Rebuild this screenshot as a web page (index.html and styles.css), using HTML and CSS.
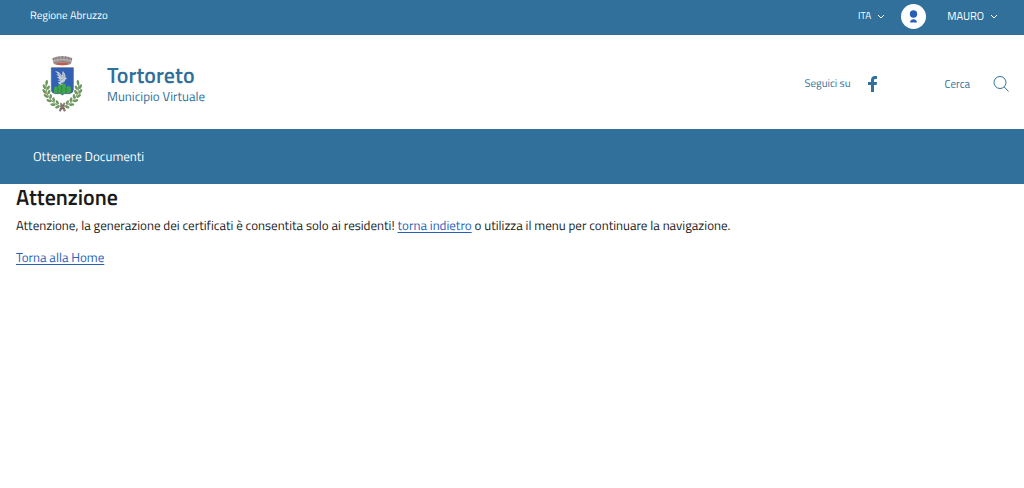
FILE: index.html
```html
<!DOCTYPE html>
<html lang="it">
<head>
    <meta charset="UTF-8">
    <meta name="viewport" content="width=device-width, initial-scale=1.0">
    <title>Tortoreto - Municipio Virtuale</title>
    <link rel="stylesheet" href="styles.css">
</head>
<body>
    <header>
        <div class="topbar">
            <a class="region" href="#">Regione Abruzzo</a>
            <div class="topbar-right">
                <button class="lang" type="button">
                    ITA
                    <svg class="chevron" viewBox="0 0 8 5" aria-hidden="true"><path d="M1 1l3 3 3-3"/></svg>
                </button>
                <button class="user" type="button">
                    <span class="avatar">
                        <svg viewBox="0 0 25 25" aria-hidden="true">
                            <circle cx="12.500" cy="10" r="3.700"/>
                            <path d="M9 18.500c.3-2 1.700-3.200 3.500-3.200s3.200 1.200 3.500 3.200z"/>
                        </svg>
                    </span>
                    MAURO
                    <svg class="chevron" viewBox="0 0 8 5" aria-hidden="true"><path d="M1 1l3 3 3-3"/></svg>
                </button>
            </div>
        </div>

        <div class="brandbar">
            <a class="brand" href="#">
                <svg class="crest" viewBox="0 0 138 174" aria-hidden="true">
                    <!-- laurel branches -->
                    <g fill="none" stroke="#6f9560" stroke-width="3">
                        <path d="M20 84C14 112 26 141 66 156"/>
                        <path d="M114 84C120 112 108 141 68 156"/>
                    </g>
                    <g id="laurel" fill="#6d9860">
                        <ellipse cx="20" cy="83" rx="4" ry="8" transform="rotate(8 20 83)"/>
                        <ellipse cx="13" cy="95" rx="4" ry="8" transform="rotate(-25 13 95)"/>
                        <ellipse cx="25" cy="98" rx="4" ry="7" transform="rotate(30 25 98)"/>
                        <ellipse cx="13" cy="109" rx="4" ry="8" transform="rotate(-38 13 109)"/>
                        <ellipse cx="27" cy="111" rx="4" ry="7" transform="rotate(20 27 111)"/>
                        <ellipse cx="18" cy="123" rx="4" ry="8" transform="rotate(-55 18 123)"/>
                        <ellipse cx="32" cy="124" rx="4" ry="7" transform="rotate(5 32 124)"/>
                        <ellipse cx="27" cy="137" rx="4" ry="8" transform="rotate(-70 27 137)"/>
                        <ellipse cx="41" cy="134" rx="4" ry="7" transform="rotate(-15 41 134)"/>
                        <ellipse cx="39" cy="149" rx="4" ry="8" transform="rotate(-88 39 149)"/>
                        <ellipse cx="52" cy="142" rx="4" ry="7" transform="rotate(-30 52 142)"/>
                        <ellipse cx="52" cy="156" rx="4" ry="7" transform="rotate(70 52 156)"/>
                    </g>
                    <use href="#laurel" transform="matrix(-1 0 0 1 134 0)"/>
                    <g fill="#b9823f">
                        <circle cx="20" cy="116" r="2"/>
                        <circle cx="34" cy="137" r="2"/>
                        <circle cx="114" cy="116" r="2"/>
                        <circle cx="100" cy="137" r="2"/>
                    </g>
                    <path d="M60 143h5l2 7 4-7h5l-4 12 6 12-6 3-5-9-5 9-6-3 6-12z" fill="#8d7d78"/>
                    <path d="M62 151h12M60 160h14" stroke="#62524e" stroke-width="2"/>
                    <!-- mural crown -->
                    <path d="M37 9q30-12 60 0l-4 18q-26 8-52 0z" fill="#a69b9b"/>
                    <path d="M40 10v7M48 7v7M57 5v7M67 4v8M77 5v7M86 7v7M94 10v7" stroke="#7c7273" stroke-width="3"/>
                    <path d="M39 17q28-9 56 0" fill="none" stroke="#c4bcbc" stroke-width="2"/>
                    <path d="M44 27q23-7 46 0-23 8-46 0z" fill="#c75747"/>
                    <path d="M42 23q25-7 50 0" fill="none" stroke="#80716f" stroke-width="2"/>
                    <!-- shield -->
                    <path d="M34 38h66v66q0 10-12 12H73l-6 4-6-4H46q-12-2-12-12z" fill="#3260b5" stroke="#5c6170" stroke-width="2"/>
                    <path d="M42 114V99q6-10 12 0v-7q5-9 11-1v-3q7-8 13 2v7q9-10 15 1v13l-7 4H73l-6 4-6-4z" fill="#3fa44f"/>
                    <path d="M54 99v14M65 91v24M78 98v15" stroke="#29733b" stroke-width="2"/>
                    <path d="M45 47l12 5 9 10 2-15 7 10 2 11 5 1-5 4-4 8-10 4 5 6-10-4-5-4 9-4-9-3 7-3-10-6 8-1-10-8 8 1z" fill="#c5ced9"/>
                    <path d="M57 56l10 13M70 56l2 12M60 76l11-5" stroke="#8492a9" stroke-width="2"/>
                </svg>
                <span class="brand-text">
                    <span class="brand-title">Tortoreto</span>
                    <span class="brand-subtitle">Municipio Virtuale</span>
                </span>
            </a>
            <div class="brand-tools">
                <div class="social">
                    <span>Seguici su</span>
                    <a href="#" aria-label="Facebook">
                        <svg class="facebook" viewBox="0 0 10 16" aria-hidden="true"><path d="M3 16V9H0V6h3V4c0-2.700 1.600-4 4-4 .9 0 1.700.1 2 .1V3H7.500C6.300 3 6 3.600 6 4.400V6h3l-.4 3H6v7z"/></svg>
                    </a>
                </div>
                <button class="search" type="button">
                    Cerca
                    <svg viewBox="0 0 16 16" aria-hidden="true"><circle cx="7" cy="6.500" r="6"/><path d="M11.300 11l4.200 4.500"/></svg>
                </button>
            </div>
        </div>

        <nav class="navbar">
            <a href="#">Ottenere Documenti</a>
        </nav>
    </header>

    <main>
        <h1>Attenzione</h1>
        <p>Attenzione, la generazione dei certificati è consentita solo ai residenti! <a href="#">torna indietro</a> o utilizza il menu per continuare la navigazione.</p>
        <p><a href="#">Torna alla Home</a></p>
    </main>
</body>
</html>
```
FILE: styles.css
```css
* {
    box-sizing: border-box;
}

body {
    margin: 0;
    font-family: "Titillium Web", Roboto, sans-serif;
    font-size: 13px;
    line-height: 20px;
    color: #1a1a1a;
    background: #fff;
    text-rendering: geometricPrecision;
}

button {
    padding: 0;
    border: none;
    background: none;
    color: inherit;
    font: inherit;
    cursor: pointer;
}

.topbar {
    display: flex;
    align-items: center;
    justify-content: space-between;
    min-height: 35px;
    padding: 0 26px 3px 30px;
    background: #30709a;
    color: #fff;
    font-size: 11px;
}

.topbar a,
.navbar a {
    color: #fff;
    text-decoration: none;
}

.topbar-right,
.lang,
.user {
    display: flex;
    align-items: center;
}

.topbar-right {
    gap: 16px;
}

.lang,
.user {
    gap: 6px;
}

.lang {
    font-size: 10px;
}

.chevron {
    width: 8px;
    height: 5px;
    fill: none;
    stroke: #fff;
}

.avatar {
    display: flex;
    width: 25px;
    height: 25px;
    margin-right: 15px;
    border-radius: 50%;
    background: #fff;
}

.avatar svg {
    width: 25px;
    height: 25px;
    fill: #2860b8;
}

.brandbar {
    display: flex;
    align-items: center;
    justify-content: space-between;
    min-height: 94px;
    padding: 4px 15px 0 40px;
    color: #30709a;
}

.brand {
    display: flex;
    align-items: center;
    gap: 21px;
    color: inherit;
    text-decoration: none;
}

.crest {
    width: 46px;
    height: 58px;
}

.brand-text {
    display: flex;
    flex-direction: column;
}

.brand-title {
    font-size: 22px;
    font-weight: 600;
    line-height: 26px;
}

.brand-subtitle {
    line-height: 18px;
}

.brand-tools,
.social,
.search {
    display: flex;
    align-items: center;
}

.brand-tools {
    gap: 67px;
    font-size: 11px;
}

.social {
    gap: 17px;
}

.social a {
    display: flex;
}

.facebook {
    width: 10px;
    height: 16px;
    fill: #30709a;
}

.search {
    gap: 23px;
}

.search svg {
    width: 16px;
    height: 16px;
    fill: none;
    stroke: #30709a;
}

.navbar {
    display: flex;
    align-items: center;
    min-height: 55px;
    padding: 0 33px;
    background: #30709a;
}

main {
    padding: 0 16px;
}

main h1 {
    margin: 0 0 6px;
    font-size: 22px;
    font-weight: 600;
    line-height: 26px;
}

main p {
    margin: 0 0 12px;
}

main a {
    color: #2860b8;
    text-underline-offset: 2px;
}
```
